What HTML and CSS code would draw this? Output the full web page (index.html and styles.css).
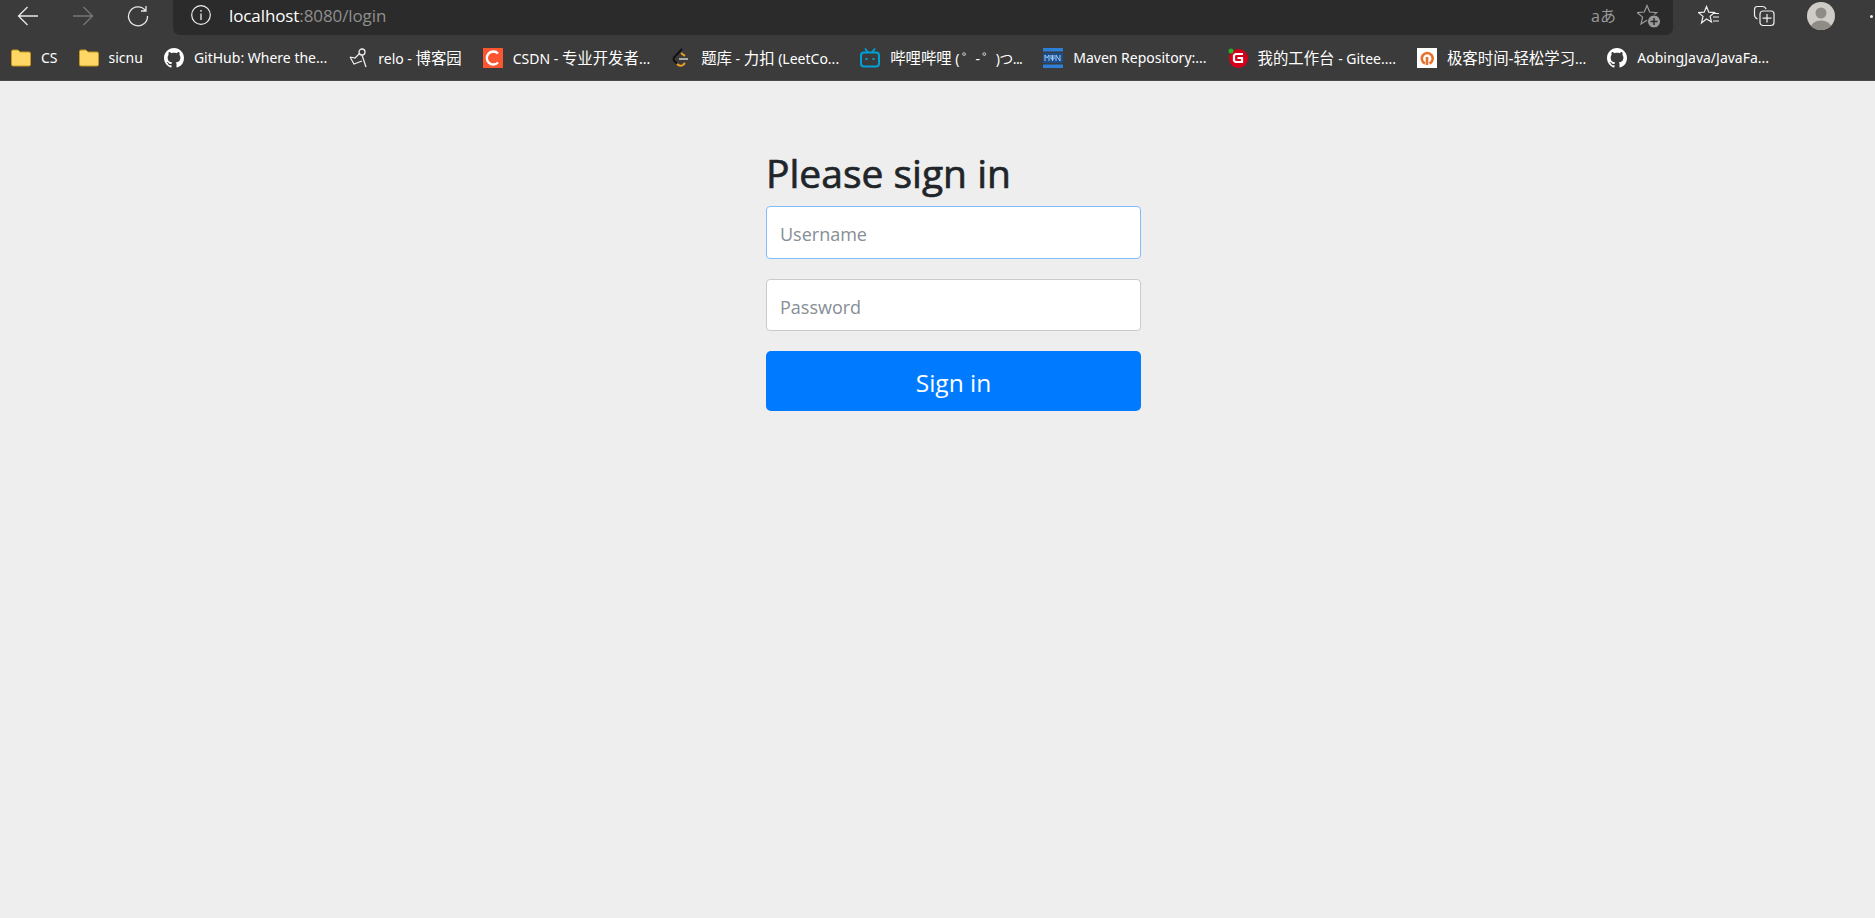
FILE: index.html
```
<!DOCTYPE html>
<html lang="en">
<head>
<meta charset="utf-8">
<title>Please sign in</title>
<link rel="stylesheet" href="styles.css">
</head>
<body>
<header class="chrome">
  <div class="toolbar">
    <div class="nav">
      <svg class="ico" viewBox="0 0 22 22"><path d="M21 11H1.500M10.500 2l-9 9 9 9" fill="none" stroke="#e8e8e8" stroke-width="1.300"/></svg>
      <svg class="ico" viewBox="0 0 22 22"><path d="M1 11h19.500M11.500 2l9 9-9 9" fill="none" stroke="#777" stroke-width="1.300"/></svg>
      <svg class="ico" viewBox="0 0 22 22"><path d="M18.500 5.500A9.500 9.500 0 1 0 20.500 11M19 1v5h-5" fill="none" stroke="#e8e8e8" stroke-width="1.300"/></svg>
    </div>
    <div class="address">
      <svg class="info" viewBox="0 0 20 20"><circle cx="10" cy="10" r="9.300" fill="none" stroke="#eee" stroke-width="1.200"/><path d="M10 8.500V15" stroke="#eee" stroke-width="1.300"/><circle cx="10" cy="5.800" r=".9" fill="#eee"/></svg>
      <span class="url"><span class="host">localhost</span>:8080/login</span>
      <span class="translate">aあ</span>
      <svg class="addfav" viewBox="0 0 24 24"><path d="M10 1.500l2.700 6.500 7 .6-5.300 4.500 1.600 6.800-6-3.600-6 3.600 1.600-6.800L.3 8.600l7-.6z" fill="none" stroke="#9a9a9a" stroke-width="1.200"/><circle cx="17" cy="17.500" r="6.500" fill="#9a9a9a" stroke="#2b2b2b" stroke-width="1"/><path d="M17 14v7M13.500 17.500h7" stroke="#2b2b2b" stroke-width="1.500"/></svg>
    </div>
    <div class="tools">
      <svg class="tool-fav" viewBox="0 0 22 22"><path d="M8.500 1.500l2.300 5.700 5.700.4-4.400 3.700 1.400 5.700-5-3-5 4 1.500-6.600L.5 7.600l5.700-.4z" fill="none" stroke="#eee" stroke-width="1.200"/><path d="M15 8.500h6M15 12h6M15 16h6" stroke="#eee" stroke-width="1.200"/></svg>
      <svg class="tool-col" viewBox="0 0 22 22"><path d="M4.500 14C2.500 13 1.500 12 1.500 10V4.500C1.500 2.500 2.500 1.500 4.500 1.500h5c2 0 3 .8 3.500 2.500" fill="none" stroke="#eee" stroke-width="1.200"/><rect x="7" y="6" width="14" height="14.500" rx="3" fill="none" stroke="#eee" stroke-width="1.200"/><path d="M14 9v8.500M9.500 13.200h9" stroke="#eee" stroke-width="1.200"/></svg>
      <svg class="avatar" viewBox="0 0 28 28"><defs><clipPath id="av"><circle cx="14" cy="14" r="14"/></clipPath></defs><circle cx="14" cy="14" r="14" fill="#cfccc8"/><g clip-path="url(#av)"><circle cx="14" cy="11" r="5.500" fill="#8f8b87"/><ellipse cx="14" cy="26" rx="10.500" ry="7.500" fill="#8f8b87"/></g></svg>
      <span class="dot"></span>
    </div>
  </div>
  <nav class="bookmarks">
    <a class="bm"><svg class="fi" viewBox="0 0 20 20"><path d="M.5 16.500V3.500q0-1.500 1.500-1.500h5l2 2h9q1.500 0 1.500 1.500v11q0 1.500-1.500 1.500H2q-1.500 0-1.500-1.500z" fill="#ffd767" stroke="#c9971c"/></svg><span>CS</span></a>
    <a class="bm"><svg class="fi" viewBox="0 0 20 20"><path d="M.5 16.500V3.500q0-1.500 1.500-1.500h5l2 2h9q1.500 0 1.500 1.500v11q0 1.500-1.500 1.500H2q-1.500 0-1.500-1.500z" fill="#ffd767" stroke="#c9971c"/></svg><span>sicnu</span></a>
    <a class="bm"><svg class="fi" viewBox="0 0 16 16"><path fill="#fff" d="M8 0C3.580 0 0 3.580 0 8c0 3.540 2.290 6.530 5.470 7.590.4.070.55-.17.55-.38 0-.19-.01-.82-.01-1.490-2.010.37-2.530-.49-2.690-.94-.09-.23-.48-.94-.82-1.130-.28-.15-.68-.52-.01-.53.63-.01 1.080.58 1.230.82.720 1.210 1.870.87 2.330.66.070-.52.280-.87.510-1.070-1.780-.2-3.640-.89-3.640-3.950 0-.87.310-1.590.820-2.150-.08-.2-.36-1.020.08-2.120 0 0 .67-.21 2.200.82.640-.18 1.320-.27 2-.27s1.360.09 2 .27c1.530-1.040 2.200-.82 2.200-.82.440 1.100.160 1.920.080 2.120.51.560.82 1.270.82 2.150 0 3.070-1.870 3.750-3.650 3.950.29.250.54.730.54 1.480 0 1.070-.01 1.930-.01 2.200 0 .21.150.46.550.38A8.010 8.010 0 0 0 16 8c0-4.420-3.580-8-8-8z"/></svg><span>GitHub: Where the...</span></a>
    <a class="bm"><svg class="fi" viewBox="0 0 20 20"><path d="M2 9l4 7 8-3M2 9l5 1 5-5" fill="none" stroke="#eee" stroke-width="1.200"/><circle cx="14" cy="4" r="3" fill="none" stroke="#eee" stroke-width="1.300"/><path d="M14 7l4 12" fill="none" stroke="#eee" stroke-width="1.300"/></svg><span>relo - <span class="cjk">博客园</span></span></a>
    <a class="bm"><svg class="fi" viewBox="0 0 20 20"><rect width="20" height="20" fill="#fc5531"/><path d="M15 5.500A6.500 6.500 0 1 0 15 14.500" fill="none" stroke="#fff" stroke-width="2.400"/></svg><span>CSDN - <span class="cjk">专业开发者</span>...</span></a>
    <a class="bm"><svg class="fi" viewBox="0 0 20 20"><path d="M11 1L3 9.500q-1 1.500 0 3l3 3" fill="none" stroke="#111" stroke-width="2"/><path d="M10 5l4 3M6 16q3 3 6 1l2-2" fill="none" stroke="#f0a020" stroke-width="2"/><path d="M8 11h9" stroke="#aaa" stroke-width="2"/></svg><span><span class="cjk">题库</span> - <span class="cjk">力扣</span> (LeetCo...</span></a>
    <a class="bm"><svg class="fi" viewBox="0 0 20 20"><rect x="1" y="4.500" width="18" height="14" rx="3" fill="none" stroke="#00a1d6" stroke-width="2"/><path d="M5 .5l3 4M15 .5l-3 4" stroke="#00a1d6" stroke-width="1.800"/><path d="M6.500 10v2M13.500 10v2" stroke="#00a1d6" stroke-width="2"/></svg><span><span class="cjk">哔哩哔哩</span> <span class="tight">( ゜- ゜)つ...</span></span></a>
    <a class="bm"><svg class="fi" viewBox="0 0 20 20"><rect width="20" height="3.500" fill="#2f7fd8"/><rect y="16.500" width="20" height="3.500" fill="#2f7fd8"/><rect y="5" width="20" height="10" fill="#1d4f8c"/><path d="M2 13V7l2 3 2-3v6M8 7v4h3V7M9.500 7v6M13 13V7l4 6V7" fill="none" stroke="#9cc8f5" stroke-width="1"/></svg><span>Maven Repository:...</span></a>
    <a class="bm"><svg class="fi" viewBox="0 0 20 20"><circle cx="10.500" cy="10.500" r="9.500" fill="#d7001b"/><path d="M15 6H7.500L6 7.500v5L7.500 14H14v-4H9.500" fill="none" stroke="#fff" stroke-width="2.200"/><circle cx="3" cy="3" r="2.500" fill="#27b02c"/></svg><span><span class="cjk">我的工作台</span> - Gitee....</span></a>
    <a class="bm"><svg class="fi" viewBox="0 0 20 20"><rect width="20" height="20" fill="#fff"/><path d="M8 15.500A5.500 5.500 0 1 1 12.500 15.500" fill="none" stroke="#e8702a" stroke-width="2.600"/><path d="M10 9v8" stroke="#e8702a" stroke-width="2.600"/></svg><span><span class="cjk">极客时间-轻松学习</span>...</span></a>
    <a class="bm"><svg class="fi" viewBox="0 0 16 16"><path fill="#fff" d="M8 0C3.580 0 0 3.580 0 8c0 3.540 2.290 6.530 5.470 7.590.4.070.55-.17.55-.38 0-.19-.01-.82-.01-1.490-2.010.37-2.530-.49-2.690-.94-.09-.23-.48-.94-.82-1.130-.28-.15-.68-.52-.01-.53.63-.01 1.080.58 1.230.82.720 1.210 1.870.87 2.330.66.070-.52.280-.87.510-1.070-1.780-.2-3.640-.89-3.640-3.950 0-.87.310-1.590.820-2.150-.08-.2-.36-1.020.08-2.120 0 0 .67-.21 2.200.82.640-.18 1.320-.27 2-.27s1.360.09 2 .27c1.530-1.040 2.200-.82 2.200-.82.440 1.100.160 1.920.080 2.120.51.560.82 1.270.82 2.150 0 3.070-1.870 3.750-3.650 3.950.29.250.54.730.54 1.480 0 1.070-.01 1.930-.01 2.200 0 .21.150.46.550.38A8.010 8.010 0 0 0 16 8c0-4.420-3.580-8-8-8z"/></svg><span>AobingJava/JavaFa...</span></a>
  </nav>
</header>
<main class="page">
  <form class="signin">
    <h2 class="heading">Please sign in</h2>
    <input class="field focused" type="text" placeholder="Username">
    <input class="field second" type="password" placeholder="Password">
    <button class="submit" type="button">Sign in</button>
  </form>
</main>
</body>
</html>
```

FILE: styles.css
```
* { box-sizing: border-box; }
html, body { margin: 0; height: 100%; }
body {
  background: #eeeeee;
  font-family: "Open Sans", "Noto Sans CJK SC", sans-serif;
  overflow: hidden;
}
.chrome { background: #3b3b3b; height: 81px; display: flex; flex-direction: column; border-bottom: 1px solid #4a4a4a; }
.toolbar { height: 35px; display: flex; align-items: flex-start; }
.nav { width: 173px; display: flex; gap: 33px; padding: 5px 0 0 17px; }
.ico { width: 22px; height: 22px; display: block; }
.address {
  width: 1500px; height: 35px; background: #2b2b2b;
  border-radius: 0 0 7px 7px; display: flex; align-items: center;
  padding: 0 0 5px 18px;
}
.info { width: 20px; height: 20px; margin-right: 18px; }
.url { font-size: 17px; letter-spacing: -.1px; color: #8f8f8f; flex: 1; }
.host { color: #fff; }
.translate { color: #9a9a9a; font-size: 16px; margin-right: 21px; }
.addfav { width: 24px; height: 24px; margin: 2px 12px 0 0; }
.tools { flex: 1; display: flex; align-items: center; padding: 2px 0 0 25px; }
.tool-fav { width: 22px; height: 22px; margin-right: 33px; }
.tool-col { width: 22px; height: 22px; margin-right: 32px; }
.avatar { width: 28px; height: 28px; }
.dot { width: 3px; height: 3px; border-radius: 50%; background: #eee; margin-left: 35px; }
.bookmarks { height: 45px; display: flex; align-items: center; padding-left: 11px; gap: 21px; white-space: nowrap; }
.bm { display: flex; align-items: center; gap: 10px; color: #fff; font-size: 14px; font-family: "Noto Sans", "Noto Sans CJK SC", sans-serif; }
.cjk { font-size: 15.4px; }
.tight { letter-spacing: -.6px; }
.fi { width: 20px; height: 20px; display: block; flex: none; }
.page { padding: 46px 0 0 766px; }
.signin { width: 375px; display: flex; flex-direction: column; }
.heading { margin: 0 0 8px; padding-top: 21px; font-size: 39px; line-height: 50px; height: 71px; font-weight: 400; -webkit-text-stroke: .7px #212529; color: #212529; }
.field {
  height: 53px; width: 100%; margin-bottom: 20px; padding: 2px 13px 0;
  border: 1px solid #cacaca; border-radius: 4px; background: #fff;
  font: 18px "Open Sans", sans-serif; color: #495057; outline: none;
}
.second { height: 52px; padding-top: 3px; }
.field::placeholder { color: #868e96; opacity: 1; }
.focused { border-color: #80bdff; }
.submit {
  height: 60px; padding: 2px 0 0; border: 0; border-radius: 5px; background: #007bff; color: #fff;
  font: 24.5px "Open Sans", sans-serif;
}
```
